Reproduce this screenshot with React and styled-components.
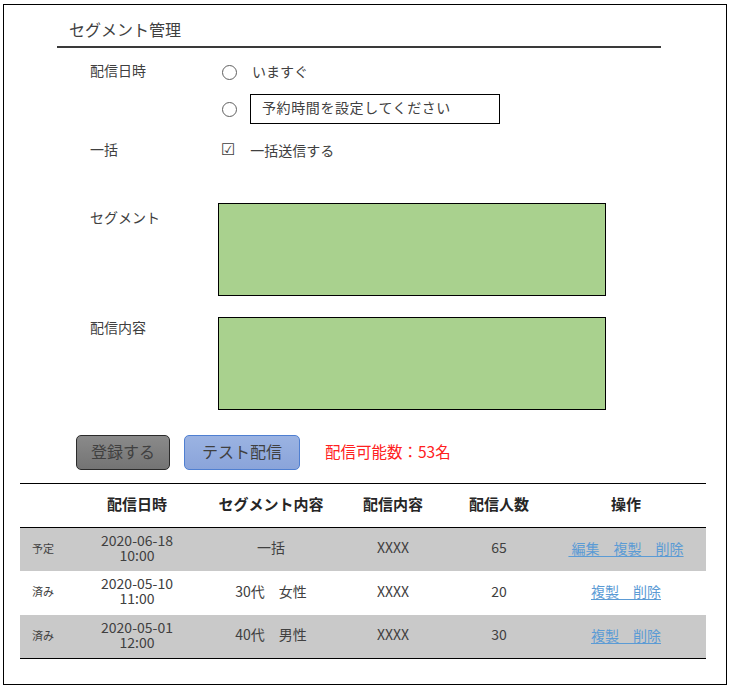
import React from "react";
import styled, { createGlobalStyle } from "styled-components";

const Global = createGlobalStyle`
  html, body { margin: 0; padding: 0; background: #fff; }
  body { font-family: "Noto Sans CJK JP", "Noto Sans", sans-serif; color: #404040; }
`;

const Frame = styled.div`
  box-sizing: border-box;
  margin: 4px 0 0 3px;
  width: 724px;
  height: 681px;
  border: 1px solid #000;
`;

const Header = styled.div`
  margin-left: 53px;
  width: 604px;
  padding: 14px 0 7px 12px;
  box-sizing: border-box;
  border-bottom: 2px solid #3a3a3a;
  font-size: 16px;
  line-height: 20px;
  color: #404040;
`;

const Form = styled.div`
  padding-left: 86px;
  margin-top: 8px;
`;

const Row = styled.div`
  display: grid;
  grid-template-columns: 128px auto;
  align-items: ${(p) => (p.$top ? "start" : "center")};
  height: ${(p) => p.$h}px;
  margin-top: ${(p) => p.$mt || 0}px;
`;

const Label = styled.div`
  font-size: 14px;
  line-height: 20px;
  color: #404040;
  padding-top: ${(p) => p.$pt || 0}px;
  padding-bottom: ${(p) => p.$pb || 0}px;
`;

const Control = styled.div`
  display: flex;
  align-items: center;
`;

const Radio = styled.span`
  box-sizing: border-box;
  width: 15px;
  height: 15px;
  border-radius: 50%;
  border: 1px solid #606060;
  margin-left: 4px;
  margin-right: ${(p) => p.$mr}px;
`;

const Text = styled.span`
  font-size: 14px;
  line-height: 20px;
  padding-bottom: 3px;
  color: #404040;
`;

const Input = styled.div`
  box-sizing: border-box;
  width: 250px;
  height: 30px;
  border: 1px solid #000;
  padding: 0 0 3px 11px;
  font-size: 14px;
  line-height: 25px;
  color: #404040;
  letter-spacing: 0.6px;
`;

const Check = styled.span`
  font-family: "DejaVu Sans", sans-serif;
  font-variant-emoji: text;
  font-size: 16px;
  line-height: 20px;
  padding-bottom: 3px;
  margin-left: 3px;
  margin-right: 15px;
  color: #404040;
`;

const GreenBox = styled.div`
  box-sizing: border-box;
  width: 388px;
  height: 93px;
  background: #a9d18e;
  border: 1px solid #000;
`;

const Actions = styled.div`
  display: flex;
  align-items: center;
  margin-top: 25px;
  padding-left: 72px;
  height: 35px;
`;

const Button = styled.div`
  box-sizing: border-box;
  width: ${(p) => p.$w}px;
  height: 35px;
  display: flex;
  align-items: center;
  justify-content: center;
  padding-bottom: 4px;
  border-radius: 5px;
  font-size: 16px;
  margin-right: ${(p) => p.$mr}px;
  color: #404040;
  background: ${(p) =>
    p.$variant === "gray"
      ? "linear-gradient(#8a8a8a, #747474)"
      : "linear-gradient(#9bb3e2, #8aa4da)"};
  border: 1px solid ${(p) => (p.$variant === "gray" ? "#2b2b2b" : "#4f7fd1")};
`;

const Notice = styled.span`
  color: #ff2020;
  font-size: 15.5px;
  padding-bottom: 3px;
`;

const Table = styled.div`
  margin: 13px 0 0 16px;
  width: 686px;
  border-top: 1px solid #000;
  border-bottom: 1px solid #000;
`;

const TRow = styled.div`
  display: grid;
  grid-template-columns: 60px 114px 154px 90px 122px 132px 1fr;
  align-items: center;
  height: ${(p) => p.$h}px;
  background: ${(p) => (p.$shade ? "#c9c9c9" : "#fff")};
  border-bottom: ${(p) => (p.$head ? "1px solid #000" : "none")};
`;

const Th = styled.div`
  text-align: center;
  font-size: 15px;
  font-weight: bold;
  padding-bottom: 5px;
  color: #262626;
`;

const Td = styled.div`
  text-align: center;
  font-size: 14px;
  line-height: 15px;
  padding-bottom: 4px;
  color: #404040;
`;

const DateLine = styled.div`
  font-size: 14px;
  line-height: 15px;
`;

const Status = styled.div`
  font-size: 11px;
  padding: 0 0 4px 12px;
  color: #404040;
`;

const Links = styled.div`
  text-align: center;
  font-size: 14px;
  padding-bottom: 4px;
  color: #5b9bd5;
  text-decoration: underline;
  text-underline-offset: 2px;
`;

const rows = [
  { status: "予定", date: "2020-06-18", time: "10:00", seg: "一括", content: "XXXX", count: "65", ops: "\u00a0編集　複製　削除", shade: true, h: 43 },
  { status: "済み", date: "2020-05-10", time: "11:00", seg: "30代　女性", content: "XXXX", count: "20", ops: "複製　削除", shade: false, h: 44 },
  { status: "済み", date: "2020-05-01", time: "12:00", seg: "40代　男性", content: "XXXX", count: "30", ops: "複製　削除", shade: true, h: 43 },
];

export default function App() {
  return (
    <>
      <Global />
      <Frame>
        <Header>セグメント管理</Header>
        <Form>
          <Row $h={32}>
            <Label $pb={4}>配信日時</Label>
            <Control>
              <Radio $mr={15} />
              <Text>いますぐ</Text>
            </Control>
          </Row>
          <Row $h={42}>
            <Label />
            <Control>
              <Radio $mr={13} />
              <Input>予約時間を設定してください</Input>
            </Control>
          </Row>
          <Row $h={42}>
            <Label $pb={4}>一括</Label>
            <Control>
              <Check>{"\u2611\uFE0E"}</Check>
              <Text>一括送信する</Text>
            </Control>
          </Row>
          <Row $h={93} $mt={31} $top>
            <Label $pt={4}>セグメント</Label>
            <GreenBox />
          </Row>
          <Row $h={93} $mt={21} $top>
            <Label>配信内容</Label>
            <GreenBox />
          </Row>
        </Form>
        <Actions>
          <Button $variant="gray" $w={94} $mr={14}>登録する</Button>
          <Button $variant="blue" $w={116} $mr={25}>テスト配信</Button>
          <Notice>配信可能数：53名</Notice>
        </Actions>
        <Table>
          <TRow $h={43} $head>
            <div />
            <Th>配信日時</Th>
            <Th>セグメント内容</Th>
            <Th>配信内容</Th>
            <Th>配信人数</Th>
            <Th>操作</Th>
          </TRow>
          {rows.map((r, i) => (
            <TRow key={i} $h={r.h} $shade={r.shade}>
              <Status>{r.status}</Status>
              <Td>
                <DateLine>{r.date}</DateLine>
                <DateLine>{r.time}</DateLine>
              </Td>
              <Td>{r.seg}</Td>
              <Td>{r.content}</Td>
              <Td>{r.count}</Td>
              <Links>{r.ops}</Links>
            </TRow>
          ))}
        </Table>
      </Frame>
    </>
  );
}
